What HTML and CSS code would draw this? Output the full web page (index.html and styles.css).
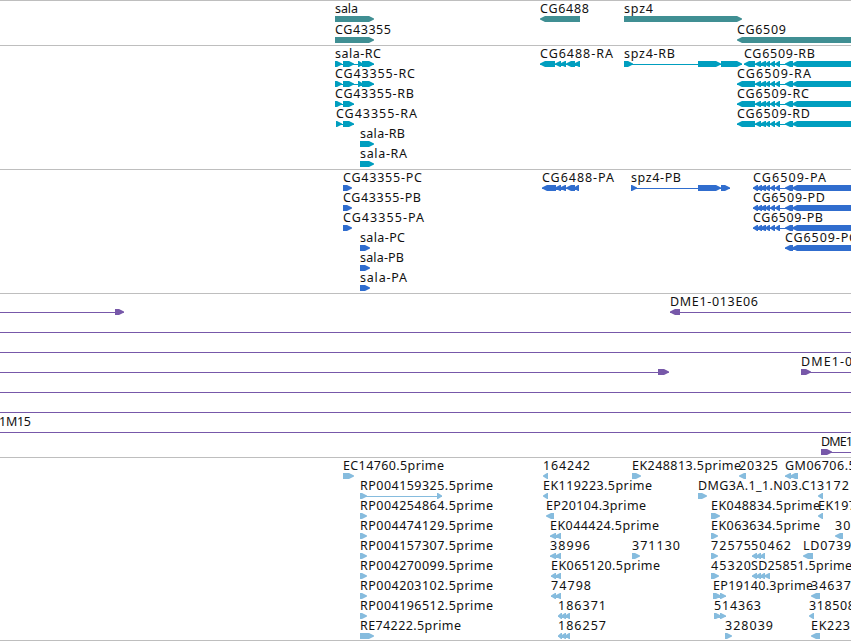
FILE: index.html
```html
<!DOCTYPE html>
<html lang="en">
<head>
    <meta charset="UTF-8">
    <title>Genome Browser</title>
    <link rel="stylesheet" href="styles.css">
</head>
<body>
    <div class="browser">
        <div class="track"><svg id="genes" class="genes" width="851" height="44"></svg></div>
        <div class="track"><svg id="transcripts" class="transcripts" width="851" height="123"></svg></div>
        <div class="track"><svg id="proteins" class="proteins" width="851" height="123"></svg></div>
        <div class="track"><svg id="clones" class="clones" width="851" height="163"></svg></div>
        <div class="track"><svg id="ests" class="ests" width="851" height="182"></svg></div>
    </div>
    <script src="tracks.js"></script>
</body>
</html>
```
FILE: styles.css
```css
body {
    margin: 0;
    background-color: #fff;
    overflow: hidden;
}
.browser {
    width: 851px;
    border-bottom: 1px solid #bebebe;
}
.track {
    border-top: 1px solid #bebebe;
}
.track svg {
    display: block;
}
.track text {
    font-family: "Noto Sans", sans-serif;
    font-size: 12.5px;
    fill: #111;
}
.genes {
    fill: #408f93;
}
.transcripts {
    fill: #009ebf;
}
.proteins {
    fill: #306dce;
}
.clones {
    fill: #7758a9;
}
.ests {
    fill: #86bcde;
}
```
FILE: tracks.js
```js
const SVG = "http://www.w3.org/2000/svg";

// Feature: [row, label, label start, label end, strand, exons]
const genes = [
    [0, "sala", 335, 358, 1, [[335, 374]]],
    [0, "CG6488", 540, 589, -1, [[540, 580]]],
    [0, "spz4", 624, 653, 1, [[624, 742]]],
    [1, "CG43355", 335, 391, 1, [[335, 374]]],
    [1, "CG6509", 737, 786, -1, [[737, 860]]]
];

const exons6509 = [[737, 755], [755, 761], [760, 766], [765, 770], [770, 775], [775, 780], [785, 793], [792, 860]];
const coding6509 = [[753, 758], [757, 762], [760, 766], [765, 770], [770, 775], [775, 780], [785, 793], [792, 860]];

const transcripts = [
    [0, "sala-RC", 335, 381, 1, [[335, 342], [343, 354], [358, 363], [362, 374]]],
    [1, "CG43355-RC", 335, 415, 1, [[335, 342], [343, 354], [358, 363], [362, 374]]],
    [2, "CG43355-RB", 335, 414, 1, [[335, 342], [343, 354]]],
    [3, "CG43355-RA", 336, 417, 1, [[336, 342], [343, 354]]],
    [4, "sala-RB", 360, 405, 1, [[360, 374]]],
    [5, "sala-RA", 360, 407, 1, [[360, 374]]],
    [0, "CG6488-RA", 540, 613, -1, [[540, 555], [555, 561], [560, 566], [566, 575], [574, 580]]],
    [0, "spz4-RB", 624, 675, 1, [[624, 633], [698, 721], [721, 742]]],
    [0, "CG6509-RB", 744, 815, -1, [[744, 755]].concat(exons6509.slice(1))],
    [1, "CG6509-RA", 737, 811, -1, exons6509],
    [2, "CG6509-RC", 737, 809, -1, exons6509],
    [3, "CG6509-RD", 737, 810, -1, exons6509]
];

const proteins = [
    [0, "CG43355-PC", 343, 422, 1, [[343, 352]]],
    [1, "CG43355-PB", 343, 421, 1, [[343, 352]]],
    [2, "CG43355-PA", 343, 424, 1, [[343, 352]]],
    [3, "sala-PC", 360, 405, 1, [[360, 370]]],
    [4, "sala-PB", 360, 404, 1, [[360, 370]]],
    [5, "sala-PA", 360, 407, 1, [[360, 370]]],
    [0, "CG6488-PA", 542, 614, -1, [[542, 556], [555, 561], [560, 566], [566, 575], [574, 579]]],
    [0, "spz4-PB", 631, 681, 1, [[631, 637], [698, 721], [721, 730]]],
    [0, "CG6509-PA", 753, 826, -1, coding6509],
    [1, "CG6509-PD", 753, 825, -1, coding6509],
    [2, "CG6509-PB", 753, 823, -1, coding6509],
    [3, "CG6509-PC", 785, 857, -1, [[785, 793], [792, 860]]]
];

const clones = [
    [0, "", 0, 0, 1, [[-20, -10], [115, 124]]],
    [0, "DME1-013E06", 670, 758, -1, [[670, 680], [860, 870]]],
    [1, "", 0, 0, 1, [[-20, -10], [860, 870]]],
    [2, "", 0, 0, 1, [[-20, -10], [860, 870]]],
    [3, "", 0, 0, 1, [[-20, -10], [658, 669]]],
    [3, "DME1-011K08", 801, 894, 1, [[801, 811], [860, 870]]],
    [4, "", 0, 0, 1, [[-20, -10], [860, 870]]],
    [5, "", 0, 0, 1, [[-20, -10], [860, 870]]],
    [6, "1M15", -1, 31, 1, [[-20, -10], [860, 870]]],
    [7, "DME1", 821, 853, 1, [[821, 832], [860, 870]]]
];

const ests = [
    [0, "EC14760.5prime", 343, 444, 1, [[343, 354]]],
    [1, "RP004159325.5prime", 360, 493, 1, [[360, 367], [437, 442]]],
    [2, "RP004254864.5prime", 360, 493, 1, [[360, 367]]],
    [3, "RP004474129.5prime", 360, 493, 1, [[360, 367]]],
    [4, "RP004157307.5prime", 360, 493, 1, [[360, 367]]],
    [5, "RP004270099.5prime", 360, 493, 1, [[360, 367]]],
    [6, "RP004203102.5prime", 360, 493, 1, [[360, 367]]],
    [7, "RP004196512.5prime", 360, 493, 1, [[360, 367]]],
    [8, "RE74222.5prime", 360, 461, 1, [[360, 374]]],
    [0, "164242", 543, 590, -1, [[543, 548]]],
    [1, "EK119223.5prime", 543, 652, -1, [[543, 548]]],
    [2, "EP20104.3prime", 546, 646, -1, [[546, 554]]],
    [3, "EK044424.5prime", 550, 659, -1, [[550, 556], [555, 561]]],
    [4, "38996", 550, 590, -1, [[550, 556], [555, 561]]],
    [5, "EK065120.5prime", 551, 660, -1, [[551, 556], [555, 561]]],
    [6, "74798", 551, 591, -1, [[551, 556], [555, 561]]],
    [7, "186371", 558, 606, -1, [[558, 562], [561, 566], [565, 570]]],
    [8, "186257", 558, 606, -1, [[558, 562], [561, 566], [565, 570]]],
    [0, "EK248813.5prime", 632, 741, 1, [[632, 641]]],
    [4, "371130", 632, 680, 1, [[632, 640]]],
    [0, "20325", 739, 778, -1, [[739, 746]]],
    [0, "GM06706.5prime", 785, 893, -1, [[785, 791], [790, 798]]],
    [1, "DMG3A.1_1.N03.C1", 698, 817, 1, [[698, 707]]],
    [1, "3172", 817, 849, -1, [[818, 823]]],
    [2, "EK048834.5prime", 711, 820, 1, [[711, 720]]],
    [2, "EK197102.5prime", 818, 927, -1, [[818, 823]]],
    [3, "EK063634.5prime", 711, 820, 1, [[711, 718]]],
    [3, "30218", 835, 875, -1, [[835, 843]]],
    [4, "72575", 711, 751, 1, [[711, 718]]],
    [4, "50462", 751, 791, -1, [[752, 757], [756, 761], [760, 765]]],
    [4, "LD07394", 803, 859, -1, [[803, 813]]],
    [5, "45320", 711, 751, 1, [[711, 719]]],
    [5, "SD25851.5prime", 751, 852, -1, [[752, 757], [756, 761], [760, 765], [764, 770]]],
    [6, "EP19140.3prime", 713, 813, 1, [[713, 721], [720, 726]]],
    [6, "346371", 811, 859, -1, [[811, 820]]],
    [7, "514363", 714, 761, 1, [[714, 721], [720, 726]]],
    [7, "318508", 809, 855, -1, [[809, 814]]],
    [8, "328039", 725, 773, 1, [[725, 732]]],
    [8, "EK223", 811, 850, -1, [[811, 820]]]
];

function arrow(a, b, strand, y) {
    const head = Math.min(6, b - a);
    if (strand > 0) {
        return `M${a} ${y}H${b - head + 1}L${b} ${y + 2.5}V${y + 3.5}L${b - head + 1} ${y + 6}H${a}Z`;
    }
    return `M${a + head - 1} ${y}H${b}V${y + 6}H${a + head - 1}L${a} ${y + 3.5}V${y + 2.5}Z`;
}

function drawTrack(id, features, pitch) {
    const svg = document.getElementById(id);
    features.forEach(([row, label, start, end, strand, exons]) => {
        const y = 15 + row * pitch;
        let d = exons.map(([a, b]) => arrow(a, b, strand, y)).join("");
        if (exons.length > 1) {
            const last = exons[exons.length - 1][1];
            d += `M${exons[0][0]} ${y + 3}H${last}v1H${exons[0][0]}Z`;
        }
        const path = document.createElementNS(SVG, "path");
        path.setAttribute("d", d);
        svg.appendChild(path);

        if (label) {
            const text = document.createElementNS(SVG, "text");
            text.setAttribute("x", start);
            text.setAttribute("y", y - 3);
            text.setAttribute("textLength", end - start);
            text.textContent = label;
            svg.appendChild(text);
        }
    });
}

drawTrack("genes", genes, 21);
drawTrack("transcripts", transcripts, 20);
drawTrack("proteins", proteins, 20);
drawTrack("clones", clones, 20);
drawTrack("ests", ests, 20);
```
